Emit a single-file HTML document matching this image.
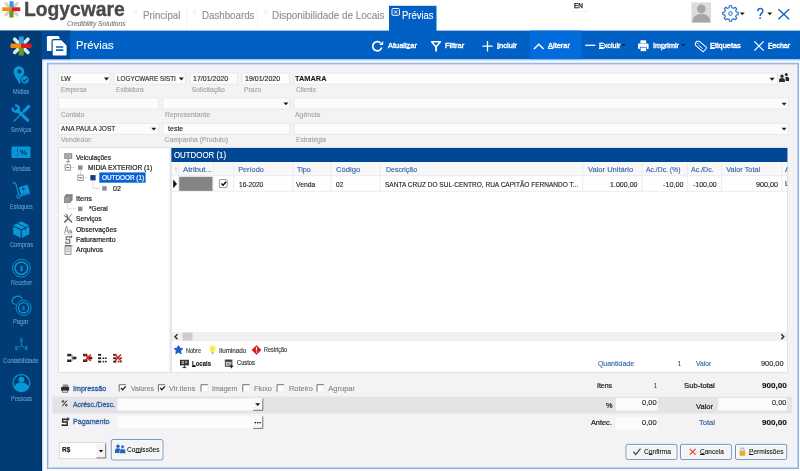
<!DOCTYPE html>
<html><head><meta charset="utf-8">
<style>
*{box-sizing:border-box;margin:0;padding:0}
html,body{width:800px;height:471px;overflow:hidden;background:#fff;font-family:"Liberation Sans",sans-serif;}
#s{position:absolute;left:0;top:0;filter:blur(0.3px)}
#tx{filter:blur(0.3px)}
.t{position:absolute;white-space:nowrap;line-height:1;transform-origin:0 50%;-webkit-text-stroke:0.12px}
.t u{text-decoration-thickness:0.5px;text-underline-offset:0.3px}
</style></head><body>
<svg id="s" width="800" height="471" viewBox="0 0 800 471">
<!--BASE-->
<rect x="0" y="0" width="800" height="31" fill="#fff"/>
<rect x="0" y="30.6" width="800" height="29" fill="#0060c4"/>
<rect x="0" y="30.6" width="42.3" height="441" fill="#023c76"/><rect x="41.200" y="59.600" width="1.100" height="412" fill="#002c62"/>
<rect x="42.3" y="30.6" width="28" height="29" fill="#004898"/>
<rect x="530" y="30.600" width="51.500" height="29" fill="#026cdc"/>
<rect x="389" y="5.800" width="47.500" height="26" fill="#0060c4"/>
<!-- panel -->
<rect x="42.300" y="59.600" width="758" height="412" fill="#f9fbfe"/><path d="M42.800 471V60.300H800" fill="none" stroke="#c4daf6" stroke-width="0.900"/>
<rect x="47.400" y="63.300" width="751" height="405.100" fill="#f3f2f5" stroke="#78a6e4" stroke-width="1"/><rect x="48.400" y="64.300" width="749" height="403.100" fill="none" stroke="#bdd3f1" stroke-width="0.900"/>
<!--FORM-->
<g fill="#fcfcfd" stroke="#e6e6ea" stroke-width="0.800">
<rect x="58.6" y="73" width="51.6" height="11.2"/>
<rect x="114.3" y="73" width="71" height="11.2"/>
<rect x="190" y="73" width="47.6" height="11.2"/>
<rect x="242" y="73" width="47.6" height="11.2"/>
<rect x="294" y="73" width="483.400" height="11.200"/>
<rect x="58.6" y="98" width="100" height="11"/>
<rect x="162.8" y="98" width="126.8" height="11"/>
<rect x="294" y="98" width="494.5" height="11"/>
<rect x="58.6" y="123.3" width="100" height="11"/>
<rect x="162.8" y="123.3" width="126.8" height="11"/>
<rect x="294" y="123.3" width="494.5" height="11"/>
</g>
<g fill="#1a1a1a">
<path d="M104.0 77.5h5l-2.5 2.900z"/>
<path d="M178.8 77.5h5l-2.5 2.900z"/>
<path d="M769.6 77.8h5l-2.5 2.900z"/>
<path d="M283.4 102.4h5l-2.5 2.900z"/>
<path d="M781.6 102.7h5l-2.5 2.900z"/>
<path d="M151.3 127.7h5l-2.5 2.900z"/>
<path d="M781.6 127.7h5l-2.5 2.900z"/>
</g>
<!--PANELS-->
<rect x="58.6" y="147.5" width="111.4" height="224.8" fill="#fff" stroke="#dddde2" stroke-width="0.8"/>
<rect x="171.4" y="147.5" width="616" height="224.8" fill="#fff" stroke="#dddde2" stroke-width="0.8"/>
<rect x="171.400" y="148" width="616" height="14" fill="#004894"/>
<rect x="172" y="162" width="615" height="13.200" fill="#f8f8fa"/>
<g stroke="#e4e4e8" stroke-width="0.7">
<path d="M172 175.600H787M172 191.300H787"/>
<path d="M178.7 162.6V191M213.7 162.6V191M233.7 162.6V191M293 162.6V191M331 162.6V191M380 162.6V191M582.7 162.6V191M641.9 162.6V191M687.3 162.6V191M721.6 162.6V191M782 162.6V191"/>
</g>
<rect x="179.200" y="176.800" width="33.300" height="14.100" fill="#848484"/>
<path d="M173.2 179.6l3.8 4.3l-3.8 4.3z" fill="#111"/>
<!-- tree selection -->
<rect x="99.300" y="172.400" width="46.300" height="10.300" fill="#0a62d4"/>
<!-- scrollbar -->
<rect x="172" y="332" width="615.4" height="9.2" fill="#f0f0f2"/>
<rect x="182.5" y="332.6" width="10" height="8" fill="#cdcdcd"/>
<path d="M177.500 334.200l-2.500 2.500l2.500 2.500M781.300 334.200l2.500 2.500l-2.500 2.500" fill="none" stroke="#222" stroke-width="1.300"/>
<!--BOTTOM-->
<rect x="52.5" y="396.6" width="739.5" height="17" fill="#e4e4e7"/>
<g fill="#fcfcfd">
<rect x="117.5" y="398.6" width="135.3" height="11.8"/>
<rect x="117.5" y="416.4" width="135.3" height="12"/>
<rect x="615.8" y="398" width="41.7" height="12.5"/>
<rect x="718.3" y="398" width="68.5" height="12.5"/>
<rect x="615.8" y="417.4" width="41.7" height="12.4"/>
</g>
<!-- A logo top -->
<g transform="translate(11.5,9.2) scale(0.86)">
 <path d="M-3.600-3.600L-6.600-6.600M3.600-3.600L6.600-6.600M-3.600 3.600L-6.600 6.600M3.600 3.600L6.600 6.600" stroke="#d2d2d2" stroke-width="3.600" stroke-linecap="round"/>
 <rect x="-2.300" y="-9.300" width="4.700" height="7.400" fill="#2f9be2"/>
 <rect x="-2.500" y="2" width="4.900" height="7.700" fill="#6a9a22"/>
 <rect x="-10.800" y="-2.200" width="10.800" height="4.400" fill="#f58a12"/>
 <rect x="0" y="-2.200" width="10.200" height="4.400" fill="#d8201f"/>
</g>
<!-- B sidebar logo -->
<g transform="translate(21.3,45.8) scale(1)">
 <path d="M-3.600-3.600L-6.600-6.600M3.600-3.600L6.600-6.600M-3.600 3.600L-6.600 6.600M3.600 3.600L6.600 6.600" stroke="#e0e8f2" stroke-width="3.600" stroke-linecap="round"/>
 <rect x="-2.300" y="-9.300" width="4.700" height="7.400" fill="#2f9be2"/>
 <rect x="-2.500" y="2" width="4.900" height="7.700" fill="#6a9a22"/>
 <rect x="-10.800" y="-2.200" width="10.800" height="4.400" fill="#f58a12"/>
 <rect x="0" y="-2.200" width="10.200" height="4.400" fill="#d8201f"/>
</g>
<!-- C docs icon -->
<path d="M46.9 37.2q0-1.200 1.200-1.200H57.600q2 0 2 2V51H46.900z" fill="#fff"/>
<path d="M52.700 41.400q0-1.100 1.100-1.100H61.300L66.600 45.400V54.400q0 1.100-1.100 1.100H53.800q-1.100 0-1.100-1.100z" fill="#fff" stroke="#004898" stroke-width="2.400"/>
<path d="M52.700 41.400q0-1.100 1.100-1.100H61.300L66.600 45.400V54.400q0 1.100-1.100 1.100H53.800q-1.100 0-1.100-1.100z" fill="#fff"/>
<path d="M56 47H63.300M56 50.200H63.300" stroke="#0060c4" stroke-width="1.700"/>
<!-- D tab icons -->
<rect x="392" y="8.500" width="7.400" height="6.800" rx="1" fill="none" stroke="#fff" stroke-width="1"/>
<path d="M394.100 10.300l3.200 3.200M397.300 10.300l-3.200 3.200" stroke="#fff" stroke-width="1"/>
<g stroke="#ebebeb" stroke-width="0.700" fill="none"><rect x="134.200" y="10.200" width="2.600" height="3"/><rect x="193.200" y="10.200" width="2.600" height="3"/><path d="M264 10.400l3 3.200M267 10.400l-3 3.200" stroke="#dcdcdc"/></g>
<path d="M186.6 8V28M257.6 8V28" stroke="#efefef" stroke-width="0.8"/>
<path d="M572 11.3H589" stroke="#ececec" stroke-width="0.8"/>
<!-- E avatar -->
<rect x="691.400" y="2.400" width="19.600" height="20.100" fill="#dcdcdc"/>
<circle cx="701.300" cy="8.900" r="4.300" fill="#a6a6a6"/>
<path d="M692.300 22.500c0-5.800 3.400-8.400 9-8.400s9 2.600 9 8.400z" fill="#a6a6a6"/>
<!-- F gear -->
<path d="M738.22 12.40L738.22 14.60L736.31 14.99L735.66 16.55L736.74 18.18L735.18 19.74L733.55 18.66L731.99 19.31L731.60 21.22L729.40 21.22L729.01 19.31L727.45 18.66L725.82 19.74L724.26 18.18L725.34 16.55L724.69 14.99L722.78 14.60L722.78 12.40L724.69 12.01L725.34 10.45L724.26 8.82L725.82 7.26L727.45 8.34L729.01 7.69L729.40 5.78L731.60 5.78L731.99 7.69L733.55 8.34L735.18 7.26L736.74 8.82L735.66 10.45L736.31 12.01Z" fill="none" stroke="#1c66c4" stroke-width="1.100" stroke-linejoin="round"/>
<circle cx="730.500" cy="13.500" r="1.800" fill="none" stroke="#1c66c4" stroke-width="1"/>
<path d="M739.800 12.500h5l-2.500 2.800zM767.300 12.500h5l-2.500 2.800z" fill="#1a1a1a"/>
<!-- G ? -->
<path d="M757.800 11.300c0-3.700 5-3.700 5-0.400c0 2.400-2.700 2.600-2.700 5" fill="none" stroke="#1c66c4" stroke-width="1.500"/>
<rect x="759.300" y="17.300" width="1.600" height="1.700" fill="#1c66c4"/>
<!-- H X -->
<path d="M778.4 9.3L789.2 19.3M789.2 9.3L778.4 19.3" stroke="#1c66c4" stroke-width="1.5"/>
<!-- I toolbar -->
<g fill="none" stroke="#fff" stroke-width="1.3">
<path d="M380.600 43A4.600 4.600 0 1 0 381.700 47.600" stroke-width="1.700"/>
<path d="M379.200 45.100H383.200V41.100Z" fill="#fff" stroke="none"/>
<path d="M431.600 41.800H440.400L436.900 46H435.100Z" stroke-width="1.500" stroke-linejoin="round"/><rect x="435.200" y="45.800" width="1.800" height="5.700" fill="#fff" stroke="none"/>
<path d="M482.4 46.2H492.6M487.5 41V51.4"/>
<path d="M534 49.1L538.8 44.3L543.6 49.1" stroke-width="1.4"/>
<path d="M585.2 45.3H595.3"/>
<path d="M754.4 41.4L763.6 50.6M763.6 41.4L754.4 50.6"/>
</g>
<path d="M621.300 44h4.400l-2.200 2.600zM681.300 44h4.400l-2.200 2.600z" fill="#0a1f44"/>
<!-- printer -->
<rect x="640.4" y="40.3" width="5.8" height="3" fill="#fff"/>
<rect x="638" y="43.6" width="10.6" height="5.4" rx="0.8" fill="#fff"/>
<rect x="640.2" y="47.2" width="6.2" height="4.2" fill="#fff" stroke="#0060c4" stroke-width="0.7"/>
<!-- tag -->
<g transform="translate(700.600,46) rotate(40) scale(0.86)" fill="none" stroke="#fff">
<path d="M-6.800-1.600L-4.600-3.300H5.800q1 0 1 1V2.300q0 1-1 1H-4.600L-6.800 1.600Z" stroke-width="1.200" stroke-linejoin="round"/>
<path d="M-2.600 0.800H3.600" stroke-width="1"/>
<circle cx="-4.300" cy="0" r="0.700" fill="#fff" stroke="none"/>
</g>
<!-- J sidebar icons -->
<g fill="#0898d8">
<!-- midias -->
<path d="M18.900 66.300a5.300 5.300 0 0 1 5.300 5.300c0 3.800-2.600 7-4.500 12.800c-2.400-5.200-6.100-9-6.100-12.800a5.300 5.300 0 0 1 5.300-5.300z"/>
<circle cx="19.400" cy="71.500" r="2" fill="#023c76"/>
<circle cx="25" cy="79.800" r="4.200" stroke="#023c76" stroke-width="0.900"/>
<path d="M23 79.800l1.500 1.600l2.700-3" fill="none" stroke="#023c76" stroke-width="1.200"/>
<!-- vendas -->
<rect x="11.500" y="146.600" width="19" height="11.300" rx="0.800"/>
<!-- compras -->
<path d="M13.200 225.400L21.200 221.200L29.300 225.400L21.200 229.300Z"/>
<path d="M13.200 226.600L20.700 230.300V238L13.200 234Z"/>
<path d="M21.800 230.300L29.300 226.600V234L21.800 238Z"/>
</g>
<path d="M17.600 148.500V156.200" stroke="#023c76" stroke-width="0.900" stroke-dasharray="1.200 1"/>
<path d="M17.300 223.200L25.400 227.400V230.500" fill="none" stroke="#023c76" stroke-width="0.900"/>
<!-- servicos -->
<g stroke="#0898d8" fill="none" stroke-linecap="round">
<path d="M17.400 110.400L27.600 120.200" stroke-width="3.200"/>
<path d="M12.600 108.600a3.300 3.300 0 0 0 5 2.600" stroke-width="2.400"/>
<path d="M15.800 105.400a3.300 3.300 0 0 1 2.600 5" stroke-width="2.400"/>
<path d="M28.800 106.400L24 111.200" stroke-width="3"/>
<path d="M24 111.200L14.200 121" stroke-width="1.200"/>
</g>
<!-- estoques -->
<g stroke="#0898d8" fill="none" stroke-width="1.100">
<path d="M12.600 183.300q2.600-1.200 3.400 1.200L18.800 194.800"/>
<circle cx="18.600" cy="196.600" r="1.700"/>
<path d="M20.400 196L30.200 193.200"/>
</g>
<path d="M18.800 187.200L27.600 184.800L29.800 192.400L21 194.900Z" fill="#0898d8"/>
<path d="M23 187.400l0.900 3.200M21.900 189.500l3.200-0.900" stroke="#023c76" stroke-width="0.800"/>
<!-- receber -->
<g stroke="#0898d8" fill="none">
<circle cx="21.400" cy="268.200" r="8.900" stroke-width="0.900"/>
<circle cx="21.400" cy="268.200" r="6.300" stroke-width="1.500"/>
<!-- pagar -->
<circle cx="23.600" cy="307.800" r="7.600" stroke-width="0.900"/>
<circle cx="23.600" cy="307.800" r="5.200" stroke-width="1.300"/>
<!-- contab -->
<path d="M21.500 342.400V345.800L18.400 347.600M21.500 345.800L24.600 347.600" stroke-width="0.900"/>
<!-- pessoas -->
<circle cx="21.400" cy="383" r="8.400" stroke-width="1.300"/>
</g>
<path d="M15.400 304.600q-3.400-1.400-3.600-4.400l1.400-1.200l0.400-1.800l1.700 0.300l0.800-1.500l1.700 0.700l1.300-1l1.400 1.600q1.400 0.600 1.400 2" fill="none" stroke="#0898d8" stroke-width="1.100" stroke-linejoin="round"/>
<circle cx="21.400" cy="379.600" r="2.900" fill="#0898d8"/>
<path d="M14.200 387.500c0.600-3.400 3.200-5 7.200-5s6.600 1.600 7.200 5a8.400 8.400 0 0 1-14.400 0z" fill="#0898d8"/>
<!-- K people icon -->
<g fill="#2a2a2a"><circle cx="782" cy="76.200" r="1.600"/><path d="M779.100 82v-2.200q0-1.700 2.900-1.700t2.900 1.700v2.200z"/><circle cx="786.300" cy="74.600" r="1.500"/><path d="M785.300 77.600q0.300-0.800 1.300-0.800q2.500 0 2.500 1.700v2.600h-3.400v-2z"/></g>
<!-- N legend -->
<path d="M178.50 345.40L179.85 348.14L182.87 348.58L180.69 350.71L181.20 353.72L178.50 352.30L175.80 353.72L176.31 350.71L174.13 348.58L177.15 348.14Z" fill="#1a5fc8" stroke="#1a5fc8" stroke-width="0.900" stroke-linejoin="round"/>
<path d="M212.600 346a2.700 2.700 0 0 1 1.400 5v1h-2.800v-1a2.700 2.700 0 0 1 1.400-5z" fill="#f3e64a"/>
<circle cx="212.600" cy="348.400" r="3.900" fill="#f6ef6a" opacity="0.450"/>
<path d="M211.500 352.800h2.200M211.900 353.700h1.400" stroke="#8c8c8c" stroke-width="0.800"/>
<path d="M256.500 345.400L261.200 350L256.500 354.600L251.800 350Z" fill="#d11f1f" stroke="#d11f1f" stroke-width="0.500" stroke-linejoin="round"/>
<path d="M256.500 347.300v3.100M256.500 351.400v1.100" stroke="#fff" stroke-width="1.100"/>
<!-- L tree lines & icons -->
<g stroke="#cdcdcd" stroke-width="0.700" fill="none">
<path d="M67.700 162V165M70.300 167.500H75"/>
<path d="M80.500 170V175.200M83 177.700H87.500"/>
<path d="M93 181V188.400H100"/>
<path d="M67.700 203V208.800H75.500"/>
</g>
<g fill="#fff" stroke="#7f7f7f" stroke-width="0.800"><rect x="65.100" y="164.900" width="5.300" height="5.300"/><rect x="77.900" y="175.100" width="5.300" height="5.300"/></g>
<path d="M66.300 167.600h2.900M79.100 177.800h2.900" stroke="#333" stroke-width="0.800"/>
<g fill="#8e8e8e"><rect x="78" y="165.300" width="4.500" height="4.500"/><rect x="102.200" y="186.200" width="4.500" height="4.500"/><rect x="78" y="206.600" width="4.500" height="4.500"/></g>
<rect x="90.300" y="175.100" width="5.300" height="5.300" fill="#143f7d"/>
<!-- veiculacoes icon -->
<rect x="64.200" y="153.200" width="8" height="5.600" fill="#8d8d8d"/><rect x="65.300" y="154.200" width="5.800" height="3.400" fill="#b9b9b9"/><path d="M68.200 158.800v3M66.300 161.800h3.800" stroke="#777" stroke-width="0.900"/><path d="M67.600 155v1.400l1.400-0.700z" fill="#555"/>
<!-- itens icon -->
<g fill="#9a9a9a" stroke="#6f6f6f" stroke-width="0.500"><rect x="66.200" y="194.400" width="6" height="6"/><rect x="65.200" y="195.600" width="6" height="6"/><rect x="64.200" y="196.800" width="6" height="6"/></g>
<!-- servicos tree icon -->
<g stroke="#6a6a6a" fill="none" stroke-linecap="round"><path d="M66.400 216.200L71.600 222" stroke-width="1.500"/><path d="M71.600 214.600L68.600 217.800" stroke-width="0.900"/><path d="M67.600 219L64.800 222" stroke-width="1.700"/><path d="M64.200 215.600a1.700 1.700 0 0 0 2.700 1M65.800 214a1.700 1.700 0 0 1 1.200 2.700" stroke-width="1"/></g>
<!-- observacoes Abc -->
<g fill="#9b9b9b"><path d="M64 233.400l2-7.400h1.200l2 7.400h-1.100l-0.500-2h-2l-0.500 2zM65.900 230.500h1.500l-0.750-3z"/><path d="M69.500 229h0.800v1.600q0.300-0.400 0.900-0.400q1.100 0 1.100 1.600t-1.100 1.600q-0.600 0-0.900-0.400v0.300h-0.800z"/></g>
<path d="M64 234.300h9" stroke="#aaa" stroke-width="0.500"/>
<!-- faturamento -->
<path d="M70.600 236.800h-4.400v3h3.600v3.400h-4.600M66 241.600v1.600M69.800 236.800v1.400" fill="none" stroke="#5f5f5f" stroke-width="1.100"/>
<path d="M71 235.200l1.600 1.600l-1.600 1.600z" fill="#5f5f5f"/>
<!-- arquivos -->
<rect x="65" y="246" width="6" height="8.400" fill="#e8e8e8" stroke="#6f6f6f" stroke-width="0.700"/><path d="M66.200 248.200h3.600M66.200 249.800h3.600M66.200 251.400h3.600" stroke="#999" stroke-width="0.500"/><path d="M65 245.600h6.400" stroke="#555" stroke-width="1"/><path d="M71.600 245l1 1.400" stroke="#777" stroke-width="0.800"/>
<!-- M tree toolbar -->
<g fill="#262626"><rect x="67.2" y="353.800" width="4" height="2.500"/><rect x="67.2" y="359.500" width="4" height="2.500"/><rect x="72.8" y="356.700" width="3.600" height="2.600"/><rect x="83.0" y="353.800" width="4" height="2.500"/><rect x="83.0" y="359.500" width="4" height="2.500"/><rect x="88.6" y="356.700" width="3.600" height="2.600"/><rect x="98.0" y="353.9" width="3.200" height="1.900"/><rect x="98.0" y="357.3" width="3.200" height="1.900"/><rect x="98.0" y="360.7" width="3.200" height="1.900"/><rect x="102.6" y="357.4" width="1.600" height="1.600"/><rect x="105.0" y="357.4" width="1.600" height="1.600"/><rect x="102.6" y="360.8" width="1.600" height="1.600"/><rect x="105.0" y="360.8" width="1.600" height="1.600"/><rect x="113.2" y="353.9" width="3.200" height="1.900"/><rect x="113.2" y="357.3" width="3.200" height="1.900"/><rect x="113.2" y="360.7" width="3.200" height="1.900"/><rect x="117.8" y="357.4" width="1.600" height="1.600"/><rect x="120.2" y="357.4" width="1.600" height="1.600"/><rect x="117.8" y="360.8" width="1.600" height="1.600"/><rect x="120.2" y="360.8" width="1.600" height="1.600"/></g>
<path d="M71.200 355h0.900v5.800h-0.900M72.100 358h0.800M87 355h0.900v5.800h-0.900M87.900 358h0.800" stroke="#262626" stroke-width="0.600" fill="none"/>
<path d="M84.800 354.600l6 6.400M90.800 354.600l-6 6.400M115 354.600l6 6.400M121 354.600l-6 6.400" stroke="#f01818" stroke-width="1.500"/>
<!-- O locais/custos icons -->
<rect x="180" y="359.800" width="8.900" height="5.600" fill="#2b2b2b"/><path d="M182 361.300h1.600v2.400h-1.600zM185 361.300h2.400M185 362.900h2.400" stroke="#e8e8e8" stroke-width="0.700" fill="none"/><path d="M184.400 365.400v2.400M182.600 367.600h3.600" stroke="#2b2b2b" stroke-width="1"/>
<rect x="225.300" y="360" width="6.600" height="6.200" fill="#d8d8d8" stroke="#3a3a3a" stroke-width="0.900"/><rect x="225.300" y="360" width="6.600" height="1.800" fill="#3a3a3a"/><path d="M226.600 363.300h4M226.600 364.800h4" stroke="#555" stroke-width="0.600"/><path d="M231.400 364.600v3.600M229.600 366.400h3.600" stroke="#222" stroke-width="1.100"/>
<!-- P bottom-left icons -->
<path d="M63 384.400h5l0.800 2.800h-6.400z" fill="#8a8a8a"/><rect x="61.100" y="387" width="8" height="3.800" rx="0.600" fill="#2e2e2e"/><rect x="62.400" y="390.200" width="5.400" height="2" fill="#cfcfcf" stroke="#3a3a3a" stroke-width="0.500"/>
<g stroke="#262626" fill="none"><path d="M66.900 400.500L62.300 406.200" stroke-width="1"/><circle cx="63" cy="401.500" r="0.900" stroke-width="0.900"/><circle cx="66.300" cy="405.200" r="0.900" stroke-width="0.900"/></g>
<path d="M67.400 419.300h-4.800v2.700h4.600v3.300h-5.600M62.600 424.200v1.100M66.800 419.300v1.100" fill="none" stroke="#262626" stroke-width="1.400"/>
<path d="M67.400 417l2.300 2.100l-2.300 2.100z" fill="#262626"/>
<!-- Q checkboxes -->
<g fill="#fff"><rect x="118.9" y="384.400" width="7.300" height="7.300"/><rect x="158.1" y="384.400" width="7.300" height="7.300"/><rect x="200.7" y="384.400" width="7.300" height="7.300"/><rect x="242.5" y="384.400" width="7.300" height="7.300"/><rect x="276.8" y="384.400" width="7.300" height="7.300"/><rect x="316.7" y="384.400" width="7.300" height="7.300"/></g>
<g fill="none" stroke="#ececec" stroke-width="0.800"><path d="M118.9 391.600h7.300v-7.200"/><path d="M158.1 391.600h7.300v-7.200"/><path d="M200.7 391.600h7.300v-7.200"/><path d="M242.5 391.600h7.300v-7.200"/><path d="M276.8 391.600h7.300v-7.200"/><path d="M316.7 391.600h7.300v-7.200"/></g>
<g fill="none" stroke="#6e6e6e" stroke-width="1"><path d="M119.2 391.600v-6.900h6.800"/><path d="M158.4 391.600v-6.900h6.800"/><path d="M201.0 391.600v-6.900h6.800"/><path d="M242.8 391.600v-6.900h6.800"/><path d="M277.1 391.600v-6.900h6.800"/><path d="M317.0 391.600v-6.900h6.800"/></g>
<rect x="219.400" y="179.500" width="7.700" height="8.100" rx="0.600" fill="#fff" stroke="#808080" stroke-width="0.800"/>
<g fill="none" stroke="#111" stroke-width="1.300"><path d="M120.900 387.900l1.800 1.900l2.900-3.500M160.100 387.900l1.800 1.900l2.900-3.500"/><path d="M221.400 183.400l1.700 1.800l3-3.500" stroke-width="1.500"/></g>
<!-- R dropdown buttons -->
<g fill="#f7f7f7" stroke="none"><rect x="252.800" y="398.400" width="10" height="12"/><rect x="252.800" y="416.300" width="10" height="12.200"/></g>
<g fill="none" stroke="#555" stroke-width="0.800"><path d="M253 410.300h9.800v-11.900M253 428.400h9.800v-12.100"/></g>
<g fill="none" stroke="#fff" stroke-width="0.700"><path d="M253.200 410v-11.300h9.200M253.200 428v-11.400h9.200"/></g>
<path d="M255.200 403.300h5l-2.500 2.800z" fill="#111"/>
<g fill="#111"><rect x="254.600" y="422" width="1.400" height="1.300"/><rect x="256.900" y="422" width="1.400" height="1.300"/><rect x="259.200" y="422" width="1.400" height="1.300"/></g>
<!-- R$ combo -->
<rect x="59.600" y="442.600" width="46.600" height="16" fill="#fff" stroke="#d4d4da" stroke-width="0.800"/>
<rect x="96.400" y="443.600" width="9.200" height="14.400" fill="#f3f3f3"/>
<path d="M96.600 457.900h9v-14.200" fill="none" stroke="#666" stroke-width="0.800"/>
<path d="M98.800 449.900h4.400l-2.200 2.500z" fill="#111"/>
<!-- S buttons -->
<g fill="#f4f4f4" stroke="#5c84b6" stroke-width="0.900">
<rect x="111.300" y="439.600" width="51.600" height="20.300" rx="1.800"/>
<rect x="626.100" y="444.400" width="50.800" height="15" rx="1.600"/>
<rect x="680.500" y="444.400" width="50.800" height="15" rx="1.600"/>
<rect x="735.500" y="444.400" width="51.200" height="15" rx="1.600"/>
</g>
<g fill="none" stroke="#fff" stroke-width="0.700">
<rect x="112.300" y="440.600" width="49.600" height="18.300" rx="1.200"/>
<rect x="627.100" y="445.400" width="48.800" height="13" rx="1"/>
<rect x="681.500" y="445.400" width="48.800" height="13" rx="1"/>
<rect x="736.500" y="445.400" width="49.200" height="13" rx="1"/>
</g>
<path d="M633.300 451.800l2.400 2.700l4.800-5.800" fill="none" stroke="#2a5a58" stroke-width="1.300"/>
<path d="M689.800 448.900l5.800 5.800M695.600 448.900l-5.800 5.800" stroke="#df3a3a" stroke-width="1.100"/>
<rect x="739.600" y="451" width="5.600" height="4.700" rx="0.600" fill="#e3ac2c"/><path d="M740.800 451v-1.500a1.600 1.600 0 0 1 3.200 0v1.500" fill="none" stroke="#9c9c9c" stroke-width="1"/>
<g fill="#1f63c4"><circle cx="118" cy="446.300" r="1.700"/><path d="M115 453v-2.600q0-2.100 3-2.100t3 2.100v2.600z"/><circle cx="122.600" cy="446.800" r="1.700" stroke="#f4f4f4" stroke-width="0.500"/><path d="M119.600 453.500v-2.600q0-2.100 3-2.100t3 2.100v2.600z" stroke="#f4f4f4" stroke-width="0.500"/></g>
<!-- T filter faint -->
<path d="M173.800 167.400h4.200l-1.600 2v2.400l-1 -0.600v-1.800z" fill="#d9d9de"/>

</svg>
<div id="tx" style="position:absolute;left:0;top:0;width:800px;height:471px;will-change:transform">
<div class="t" style="left:24.40px;top:-2px;font-size:21px;color:#4a4a4c;font-weight:bold;transform:scaleX(0.9178);-webkit-text-stroke:0.35px #4a4a4c;">Logycware</div>
<div class="t" style="left:66.60px;top:21px;font-size:6.5px;color:#787878;font-style:italic;transform:scaleX(1.0246);">Credibility Solutions</div>
<div class="t" style="left:143.00px;top:10px;font-size:10.6px;color:#8e8e8e;transform:scaleX(0.9203);">Principal</div>
<div class="t" style="left:201.60px;top:10px;font-size:10.6px;color:#8e8e8e;transform:scaleX(0.9173);">Dashboards</div>
<div class="t" style="left:271.60px;top:10px;font-size:10.6px;color:#8e8e8e;transform:scaleX(0.9354);">Disponibilidade de Locais</div>
<div class="t" style="left:402.40px;top:10px;font-size:10.6px;color:#fff;transform:scaleX(0.8945);">Prévias</div>
<div class="t" style="left:574.40px;top:2px;font-size:7px;color:#000;transform:scaleX(0.9246);-webkit-text-stroke:0.25px;">EN</div>
<div class="t" style="left:76.40px;top:40px;font-size:11px;color:#fff;transform:scaleX(1.0249);">Prévias</div>
<div class="t" style="left:387.50px;top:42px;font-size:7px;color:#fff;transform:scaleX(1.0612);-webkit-text-stroke:0.38px #fff;">Atuali<u>z</u>ar</div>
<div class="t" style="left:445.30px;top:42px;font-size:7px;color:#fff;transform:scaleX(1.0732);-webkit-text-stroke:0.38px #fff;">Filtrar</div>
<div class="t" style="left:496.70px;top:42px;font-size:7px;color:#fff;transform:scaleX(1.0756);-webkit-text-stroke:0.38px #fff;"><u>I</u>ncluir</div>
<div class="t" style="left:548.40px;top:42px;font-size:7px;color:#fff;transform:scaleX(1.0667);-webkit-text-stroke:0.38px #fff;"><u>A</u>lterar</div>
<div class="t" style="left:598.80px;top:42px;font-size:7px;color:#fff;transform:scaleX(1.0230);-webkit-text-stroke:0.38px #fff;"><u>E</u>xcluir</div>
<div class="t" style="left:652.80px;top:42px;font-size:7px;color:#fff;transform:scaleX(1.0245);-webkit-text-stroke:0.38px #fff;">Im<u>p</u>rimir</div>
<div class="t" style="left:710.30px;top:42px;font-size:7px;color:#fff;transform:scaleX(1.0518);-webkit-text-stroke:0.38px #fff;"><u>E</u>tiquetas</div>
<div class="t" style="left:767.80px;top:42px;font-size:7px;color:#fff;transform:scaleX(1.0185);-webkit-text-stroke:0.38px #fff;"><u>F</u>echar</div>
<div class="t" style="left:12.60px;top:89px;font-size:6.3px;color:#5c9fd3;transform:scaleX(0.8842);">Mídias</div>
<div class="t" style="left:10.70px;top:127px;font-size:6.3px;color:#5c9fd3;transform:scaleX(0.8404);">Serviços</div>
<div class="t" style="left:11.50px;top:166px;font-size:6.3px;color:#5c9fd3;transform:scaleX(0.8803);">Vendas</div>
<div class="t" style="left:9.70px;top:204px;font-size:6.3px;color:#5c9fd3;transform:scaleX(0.8681);">Estoques</div>
<div class="t" style="left:10.00px;top:242px;font-size:6.3px;color:#5c9fd3;transform:scaleX(0.9003);">Compras</div>
<div class="t" style="left:10.70px;top:280px;font-size:6.3px;color:#5c9fd3;transform:scaleX(0.8861);">Receber</div>
<div class="t" style="left:13.20px;top:319px;font-size:6.3px;color:#5c9fd3;transform:scaleX(0.9100);">Pagar</div>
<div class="t" style="left:3.00px;top:358px;font-size:6.3px;color:#5c9fd3;transform:scaleX(0.9269);">Contabilidade</div>
<div class="t" style="left:10.70px;top:396px;font-size:6.3px;color:#5c9fd3;transform:scaleX(0.8735);">Pessoas</div>
<div class="t" style="left:61.00px;top:75px;font-size:7.5px;color:#1e1e1e;transform:scaleX(0.9156);">LW</div>
<div class="t" style="left:116.70px;top:75px;font-size:7.5px;color:#1e1e1e;transform:scaleX(0.8496);">LOGYCWARE SISTI</div>
<div class="t" style="left:193.40px;top:75px;font-size:7.5px;color:#1e1e1e;transform:scaleX(0.9348);">17/01/2020</div>
<div class="t" style="left:245.40px;top:75px;font-size:7.5px;color:#1e1e1e;transform:scaleX(0.9348);">19/01/2020</div>
<div class="t" style="left:295.00px;top:75px;font-size:7.5px;color:#1e1e1e;font-weight:bold;transform:scaleX(0.9863);">TAMARA</div>
<div class="t" style="left:61.10px;top:125px;font-size:7.5px;color:#1e1e1e;transform:scaleX(0.8762);">ANA PAULA JOST</div>
<div class="t" style="left:167.70px;top:125px;font-size:7.5px;color:#1e1e1e;transform:scaleX(0.9406);">teste</div>
<div class="t" style="left:61.00px;top:87px;font-size:6.8px;color:#a2a2a2;transform:scaleX(0.9447);">Empresa</div>
<div class="t" style="left:116.40px;top:87px;font-size:6.8px;color:#a2a2a2;transform:scaleX(0.9738);">Exibidora</div>
<div class="t" style="left:191.80px;top:87px;font-size:6.8px;color:#a2a2a2;">Solicitação</div>
<div class="t" style="left:243.80px;top:87px;font-size:6.8px;color:#a2a2a2;transform:scaleX(0.9682);">Prazo</div>
<div class="t" style="left:296.00px;top:87px;font-size:6.8px;color:#a2a2a2;transform:scaleX(0.9588);">Cliente</div>
<div class="t" style="left:60.50px;top:112px;font-size:6.8px;color:#a2a2a2;transform:scaleX(0.9827);">Contato</div>
<div class="t" style="left:164.50px;top:112px;font-size:6.8px;color:#a2a2a2;transform:scaleX(1.0114);">Representante</div>
<div class="t" style="left:295.00px;top:112px;font-size:6.8px;color:#a2a2a2;transform:scaleX(1.0178);">Agência</div>
<div class="t" style="left:60.50px;top:137px;font-size:6.8px;color:#a2a2a2;transform:scaleX(1.0161);">Vendedor:</div>
<div class="t" style="left:164.50px;top:137px;font-size:6.8px;color:#a2a2a2;">Campanha (Produto)</div>
<div class="t" style="left:296.00px;top:137px;font-size:6.8px;color:#a2a2a2;transform:scaleX(0.9801);">Estratégia</div>
<div class="t" style="left:76.00px;top:154px;font-size:7px;color:#222;transform:scaleX(0.9368);-webkit-text-stroke:0.2px;">Veiculações</div>
<div class="t" style="left:88.10px;top:164px;font-size:7px;color:#222;transform:scaleX(0.9555);-webkit-text-stroke:0.2px;">MIDIA EXTERIOR (1)</div>
<div class="t" style="left:101.60px;top:174px;font-size:7px;color:#fff;transform:scaleX(0.9097);-webkit-text-stroke:0.2px;">OUTDOOR (1)</div>
<div class="t" style="left:113.00px;top:185px;font-size:7px;color:#222;-webkit-text-stroke:0.2px;">02</div>
<div class="t" style="left:76.00px;top:195px;font-size:7px;color:#222;transform:scaleX(1.0535);-webkit-text-stroke:0.2px;">Itens</div>
<div class="t" style="left:89.40px;top:205px;font-size:7px;color:#222;transform:scaleX(0.9373);-webkit-text-stroke:0.2px;">*Geral</div>
<div class="t" style="left:76.00px;top:215px;font-size:7px;color:#222;transform:scaleX(0.9537);-webkit-text-stroke:0.2px;">Serviços</div>
<div class="t" style="left:76.00px;top:226px;font-size:7px;color:#222;transform:scaleX(0.9867);-webkit-text-stroke:0.2px;">Observações</div>
<div class="t" style="left:76.00px;top:236px;font-size:7px;color:#222;-webkit-text-stroke:0.2px;">Faturamento</div>
<div class="t" style="left:76.00px;top:246px;font-size:7px;color:#222;transform:scaleX(0.9914);-webkit-text-stroke:0.2px;">Arquivos</div>
<div class="t" style="left:174.20px;top:151px;font-size:8.6px;color:#fff;transform:scaleX(0.9153);">OUTDOOR (1)</div>
<div class="t" style="left:183.00px;top:166px;font-size:7.3px;color:#2f62a8;transform:scaleX(1.0673);">Atribut...</div>
<div class="t" style="left:238.20px;top:166px;font-size:7.3px;color:#2f62a8;">Período</div>
<div class="t" style="left:296.70px;top:166px;font-size:7.3px;color:#2f62a8;transform:scaleX(0.9901);">Tipo</div>
<div class="t" style="left:335.70px;top:166px;font-size:7.3px;color:#2f62a8;transform:scaleX(1.0508);">Código</div>
<div class="t" style="left:385.60px;top:166px;font-size:7.3px;color:#2f62a8;transform:scaleX(0.9583);">Descrição</div>
<div class="t" style="left:587.70px;top:166px;font-size:7.3px;color:#2f62a8;transform:scaleX(1.0327);">Valor Unitário</div>
<div class="t" style="left:646.00px;top:166px;font-size:7.3px;color:#2f62a8;transform:scaleX(0.9325);">Ac./Dc. (%)</div>
<div class="t" style="left:691.40px;top:166px;font-size:7.3px;color:#2f62a8;transform:scaleX(0.9611);">Ac./Dc.</div>
<div class="t" style="left:726.30px;top:166px;font-size:7.3px;color:#2f62a8;">Valor Total</div>
<div class="t" style="left:238.70px;top:181px;font-size:7.3px;color:#1a1a1a;transform:scaleX(0.9074);">16-2020</div>
<div class="t" style="left:296.20px;top:181px;font-size:7.3px;color:#1a1a1a;transform:scaleX(0.9322);">Venda</div>
<div class="t" style="left:335.70px;top:181px;font-size:7.3px;color:#1a1a1a;transform:scaleX(0.8985);">02</div>
<div class="t" style="left:384.80px;top:181px;font-size:7.3px;color:#1a1a1a;transform:scaleX(0.8952);">SANTA CRUZ DO SUL-CENTRO, RUA CAPITÃO FERNANDO T...</div>
<div class="t" style="left:609.70px;top:181px;font-size:7.3px;color:#1a1a1a;transform:scaleX(0.9681);">1.000,00</div>
<div class="t" style="left:662.50px;top:181px;font-size:7.3px;color:#1a1a1a;transform:scaleX(0.9902);">-10,00</div>
<div class="t" style="left:693.30px;top:181px;font-size:7.3px;color:#1a1a1a;transform:scaleX(0.9576);">-100,00</div>
<div class="t" style="left:756.00px;top:181px;font-size:7.3px;color:#1a1a1a;transform:scaleX(0.9853);">900,00</div>
<div class="t" style="left:186.00px;top:348px;font-size:6.3px;color:#333;transform:scaleX(0.8743);">Nobre</div>
<div class="t" style="left:219.00px;top:348px;font-size:6.3px;color:#333;">Iluminado</div>
<div class="t" style="left:263.70px;top:347px;font-size:6.3px;color:#333;transform:scaleX(0.8681);">Restrição</div>
<div class="t" style="left:192.00px;top:360px;font-size:7px;color:#111;font-weight:bold;transform:scaleX(0.8563);"><u>L</u>ocais</div>
<div class="t" style="left:236.75px;top:360px;font-size:6.8px;color:#222;transform:scaleX(0.8437);">Custos</div>
<div class="t" style="left:597.90px;top:360px;font-size:7px;color:#2f62a8;">Quantidade</div>
<div class="t" style="left:677.60px;top:360px;font-size:7px;color:#222;transform:scaleX(0.7168);">1</div>
<div class="t" style="left:696.30px;top:360px;font-size:7px;color:#2f62a8;transform:scaleX(0.9603);">Valor</div>
<div class="t" style="left:761.00px;top:360px;font-size:7px;color:#222;transform:scaleX(1.0503);">900,00</div>
<div class="t" style="left:72.50px;top:385px;font-size:7.5px;color:#2a5b9e;transform:scaleX(0.9481);-webkit-text-stroke:0.3px #2a5b9e;">Impressão</div>
<div class="t" style="left:72.50px;top:401px;font-size:7.5px;color:#2a5b9e;transform:scaleX(0.9078);-webkit-text-stroke:0.3px #2a5b9e;">Acrésc./Desc.</div>
<div class="t" style="left:73.00px;top:418px;font-size:7.5px;color:#2a5b9e;transform:scaleX(0.9511);-webkit-text-stroke:0.3px #2a5b9e;">Pagamento</div>
<div class="t" style="left:130.70px;top:385px;font-size:7.5px;color:#858585;transform:scaleX(0.9246);">Valores</div>
<div class="t" style="left:168.70px;top:385px;font-size:7.5px;color:#858585;transform:scaleX(0.9701);">Vlr.Itens</div>
<div class="t" style="left:212.00px;top:385px;font-size:7.5px;color:#858585;transform:scaleX(0.9338);">Imagem</div>
<div class="t" style="left:253.80px;top:385px;font-size:7.5px;color:#858585;transform:scaleX(0.9758);">Fluxo</div>
<div class="t" style="left:288.50px;top:385px;font-size:7.5px;color:#858585;transform:scaleX(0.9881);">Roteiro</div>
<div class="t" style="left:328.30px;top:385px;font-size:7.5px;color:#858585;">Agrupar</div>
<div class="t" style="left:596.50px;top:382px;font-size:7.3px;color:#1c1c1c;transform:scaleX(0.9540);-webkit-text-stroke:0.22px;">Itens</div>
<div class="t" style="left:653.70px;top:382px;font-size:7.3px;color:#1c1c1c;transform:scaleX(0.6892);">1</div>
<div class="t" style="left:684.00px;top:382px;font-size:7.3px;color:#1c1c1c;transform:scaleX(1.0541);-webkit-text-stroke:0.22px;">Sub-total</div>
<div class="t" style="left:761.50px;top:382px;font-size:7.3px;color:#111;font-weight:bold;transform:scaleX(1.1107);">900,00</div>
<div class="t" style="left:606.00px;top:402px;font-size:7.3px;color:#1c1c1c;-webkit-text-stroke:0.22px;">%</div>
<div class="t" style="left:641.90px;top:399px;font-size:7.3px;color:#1c1c1c;transform:scaleX(1.0279);">0,00</div>
<div class="t" style="left:695.50px;top:403px;font-size:7.3px;color:#1c1c1c;transform:scaleX(1.0303);-webkit-text-stroke:0.22px;">Valor</div>
<div class="t" style="left:772.00px;top:399px;font-size:7.3px;color:#1c1c1c;transform:scaleX(1.0068);">0,00</div>
<div class="t" style="left:591.00px;top:419px;font-size:7.3px;color:#1c1c1c;-webkit-text-stroke:0.22px;">Antec.</div>
<div class="t" style="left:641.90px;top:419px;font-size:7.3px;color:#1c1c1c;transform:scaleX(1.0279);">0,00</div>
<div class="t" style="left:698.80px;top:419px;font-size:7.3px;color:#2a5b9e;transform:scaleX(1.0375);">Total</div>
<div class="t" style="left:761.50px;top:419px;font-size:7.3px;color:#111;font-weight:bold;transform:scaleX(1.1107);">900,00</div>
<div class="t" style="left:62.00px;top:446px;font-size:7.6px;color:#111;font-weight:bold;transform:scaleX(0.8643);">R$</div>
<div class="t" style="left:127.00px;top:446px;font-size:8px;color:#1a1a1a;transform:scaleX(0.8212);">Co<u>m</u>issões</div>
<div class="t" style="left:643.80px;top:448px;font-size:7.8px;color:#1a1a1a;transform:scaleX(0.8518);">C<u>o</u>nfirma</div>
<div class="t" style="left:699.60px;top:448px;font-size:7.8px;color:#1a1a1a;transform:scaleX(0.8354);"><u>C</u>ancela</div>
<div class="t" style="left:749.00px;top:448px;font-size:7.8px;color:#1a1a1a;transform:scaleX(0.8470);"><u>P</u>ermissões</div>
<div class="t" style="left:20.30px;top:149px;font-size:8px;color:#023c76;font-weight:bold;transform:scaleX(1.0246);">%</div>
<div class="t" style="left:19.80px;top:266px;font-size:6.3px;color:#0898d8;font-weight:bold;transform:scaleX(0.9102);">$</div>
<div class="t" style="left:22.20px;top:306px;font-size:5.5px;color:#0898d8;font-weight:bold;transform:scaleX(0.9143);">$</div>
<div class="t" style="left:20.20px;top:339px;font-size:4.8px;color:#0898d8;font-weight:bold;transform:scaleX(0.9731);">$</div>
<div class="t" style="left:15.00px;top:347px;font-size:4.8px;color:#0898d8;font-weight:bold;transform:scaleX(0.9731);">$</div>
<div class="t" style="left:25.40px;top:347px;font-size:4.8px;color:#0898d8;font-weight:bold;transform:scaleX(0.9731);">$</div>
<div class="t" style="left:785.00px;top:166px;font-size:7px;color:#2f62a8;transform:scaleX(0.9846);clip-path:inset(0 45% 0 0);">A</div>
<div class="t" style="left:785.00px;top:180px;font-size:7px;color:#222;transform:scaleX(0.9728);clip-path:inset(0 35% 0 0);">L</div>
</div>
</body></html>
